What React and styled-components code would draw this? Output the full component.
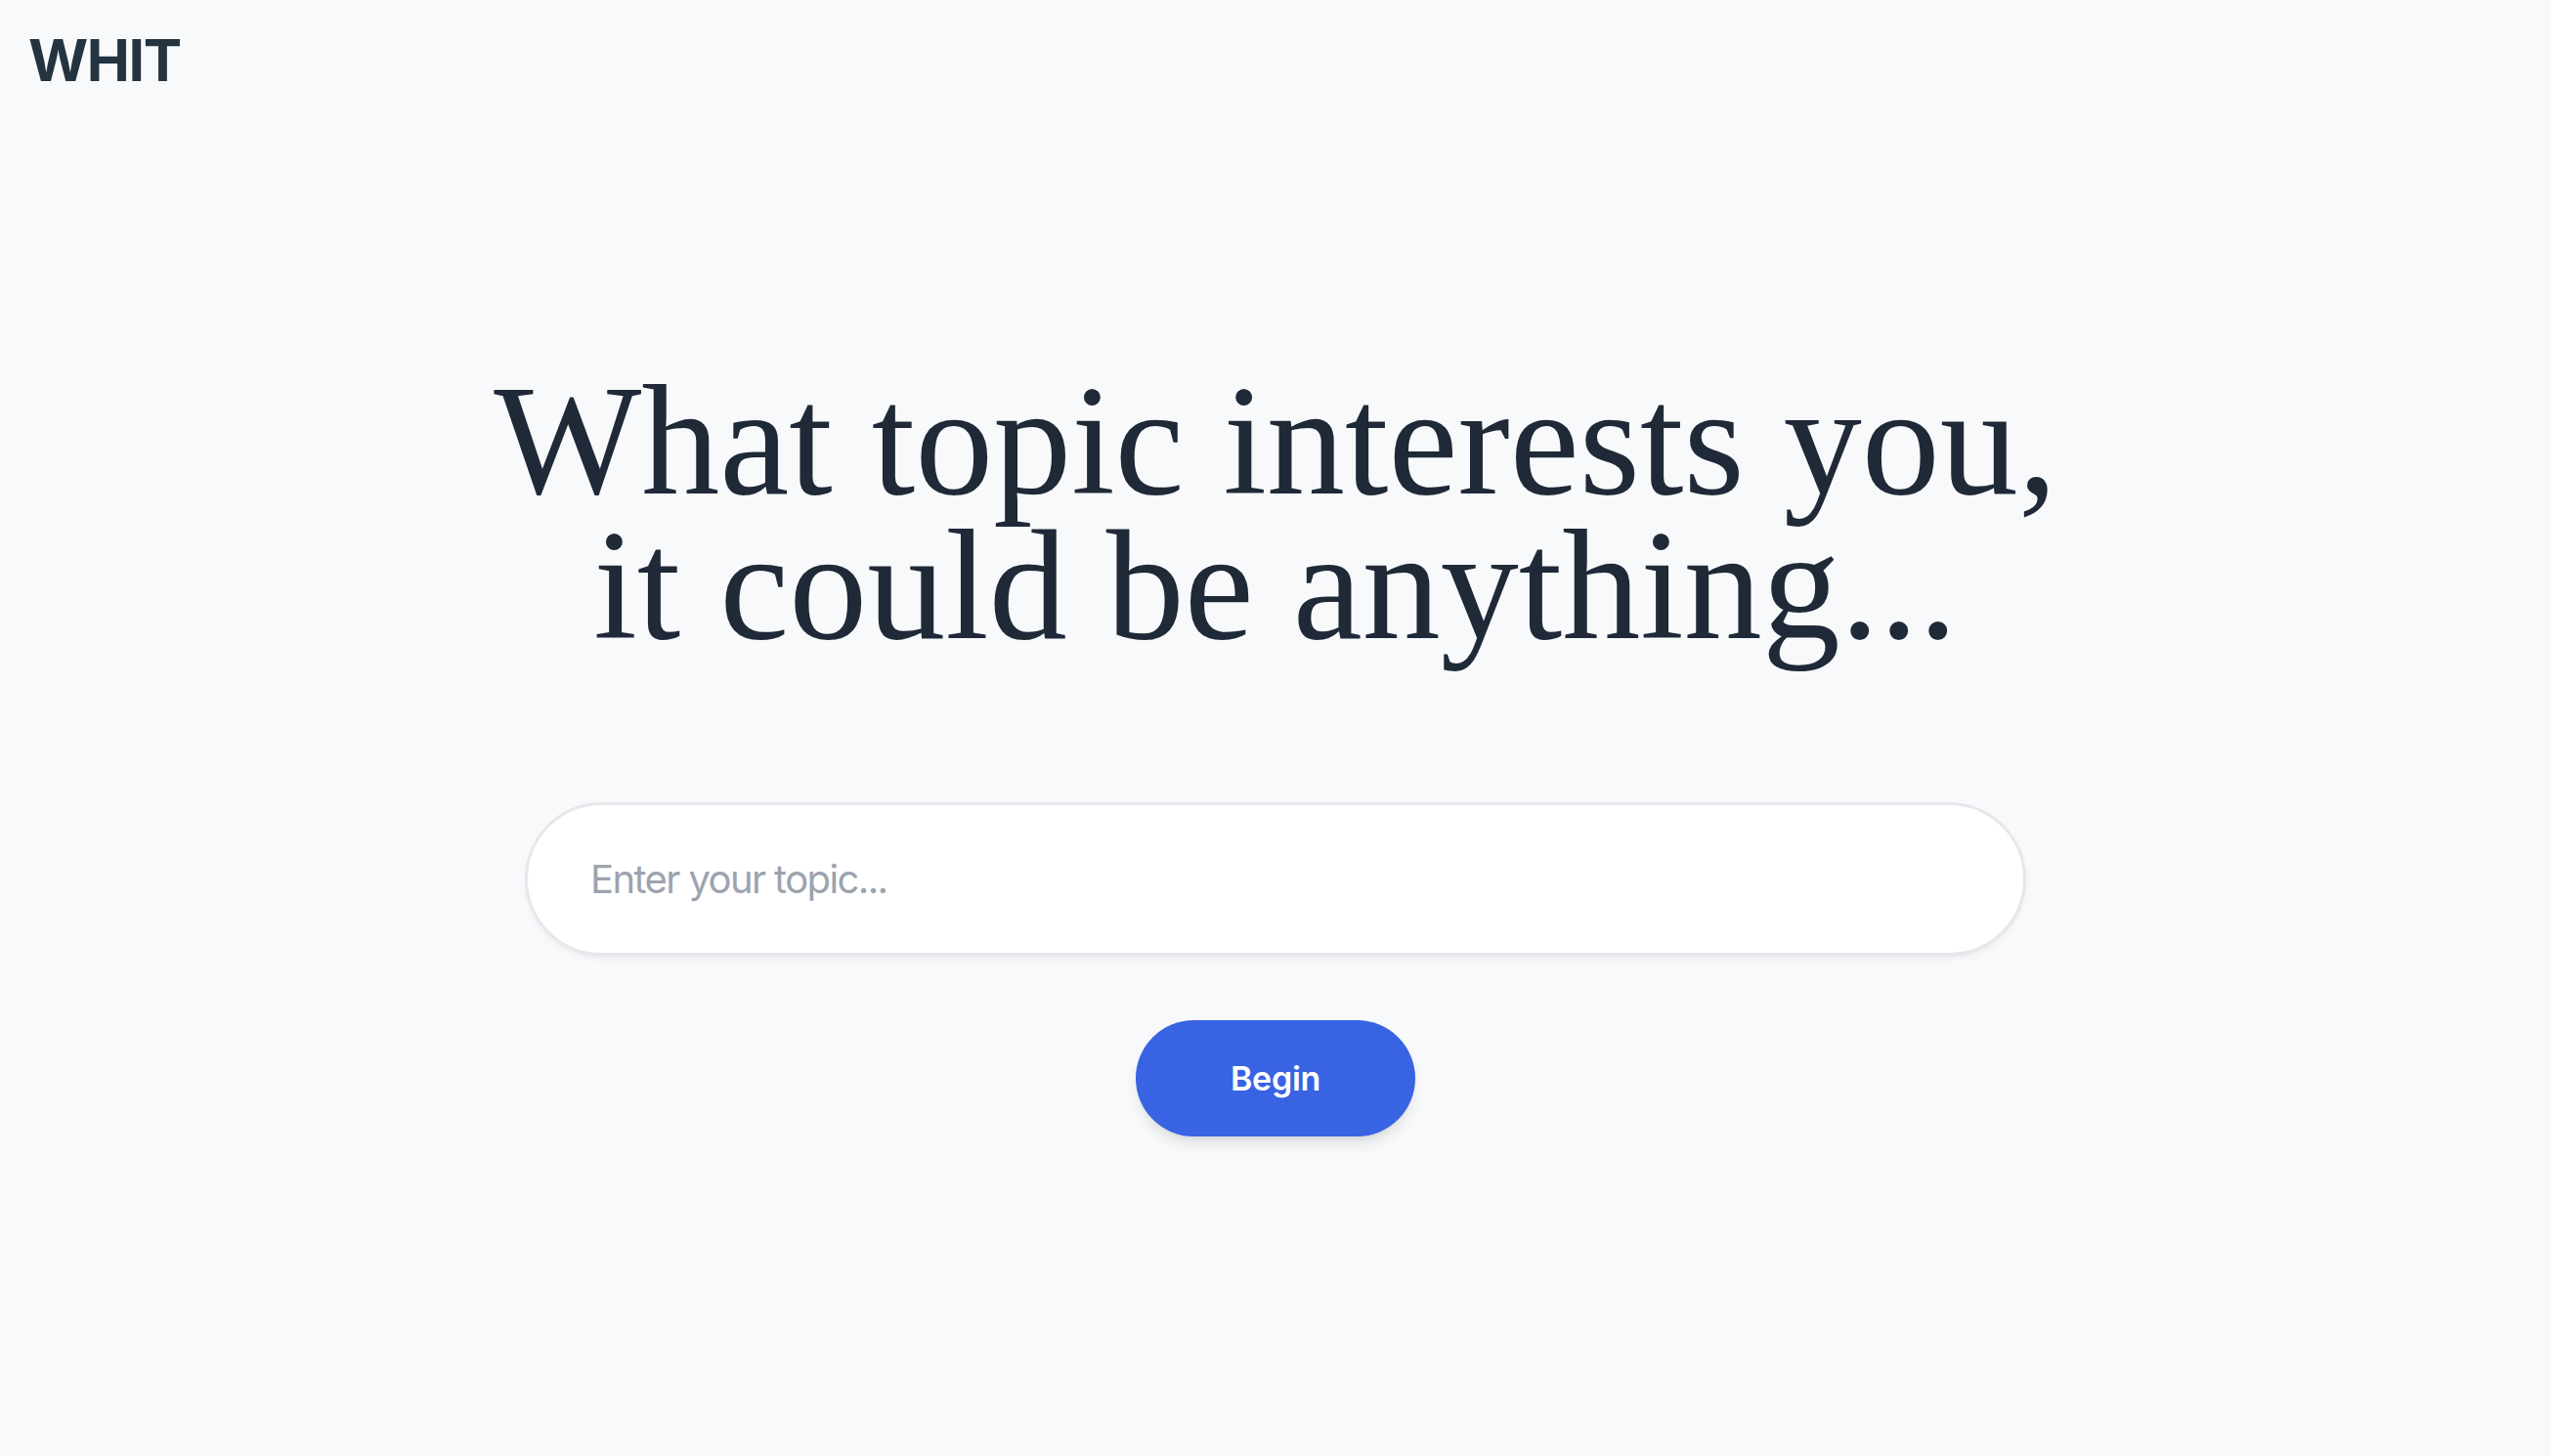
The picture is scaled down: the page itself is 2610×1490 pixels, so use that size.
import React from "react";
import styled, { createGlobalStyle } from "styled-components";

const Global = createGlobalStyle`
  html, body {
    margin: 0;
    padding: 0;
    background: #f8f9fb;
  }
  body {
    font-family: Inter, "Noto Sans", sans-serif;
  }
  * { box-sizing: border-box; }
`;

const Page = styled.div`
  min-height: 1490px;
  background: #f8f9fb;
  display: flex;
  flex-direction: column;
`;

const Header = styled.header`
  padding: 33px 29px 0;
`;

const Logo = styled.div`
  font-family: Inter, "Noto Sans", sans-serif;
  font-weight: 700;
  font-size: 59px;
  line-height: 58px;
  color: #233440;
  letter-spacing: -1.4px;
`;

const Main = styled.main`
  display: flex;
  flex-direction: column;
  align-items: center;
  margin-top: 286px;
`;

const Heading = styled.h1`
  margin: 0;
  font-family: "Liberation Serif", "Times New Roman", serif;
  font-weight: 400;
  font-size: 160px;
  line-height: 148px;
  color: #1f2937;
  text-align: center;
`;

const TopicInput = styled.input`
  margin-top: 148px;
  width: 1536px;
  height: 157px;
  padding: 0 64px;
  border: 3px solid #e5e7eb;
  border-radius: 9999px;
  background: #ffffff;
  font-family: Inter, "Noto Sans", sans-serif;
  font-size: 40px;
  letter-spacing: -1.6px;
  color: #1f2937;
  outline: none;
  box-shadow: 0 4px 8px -2px rgba(0, 0, 0, 0.06), 0 2px 4px -2px rgba(0, 0, 0, 0.04);

  &::placeholder {
    color: #9ca3af;
  }
`;

const BeginButton = styled.button`
  margin-top: 66px;
  width: 286px;
  height: 119px;
  border: none;
  border-radius: 9999px;
  background: #3863e2;
  color: #ffffff;
  font-family: Inter, "Noto Sans", sans-serif;
  font-weight: 600;
  font-size: 34px;
  letter-spacing: -0.3px;
  cursor: pointer;
  box-shadow: 0 10px 15px -3px rgba(0, 0, 0, 0.1), 0 4px 6px -4px rgba(0, 0, 0, 0.1);
`;

export default function App() {
  return (
    <Page>
      <Global />
      <Header>
        <Logo>WHIT</Logo>
      </Header>
      <Main>
        <Heading>
          What topic interests you,
          <br />
          it could be anything...
        </Heading>
        <TopicInput type="text" placeholder="Enter your topic..." />
        <BeginButton type="button">Begin</BeginButton>
      </Main>
    </Page>
  );
}
